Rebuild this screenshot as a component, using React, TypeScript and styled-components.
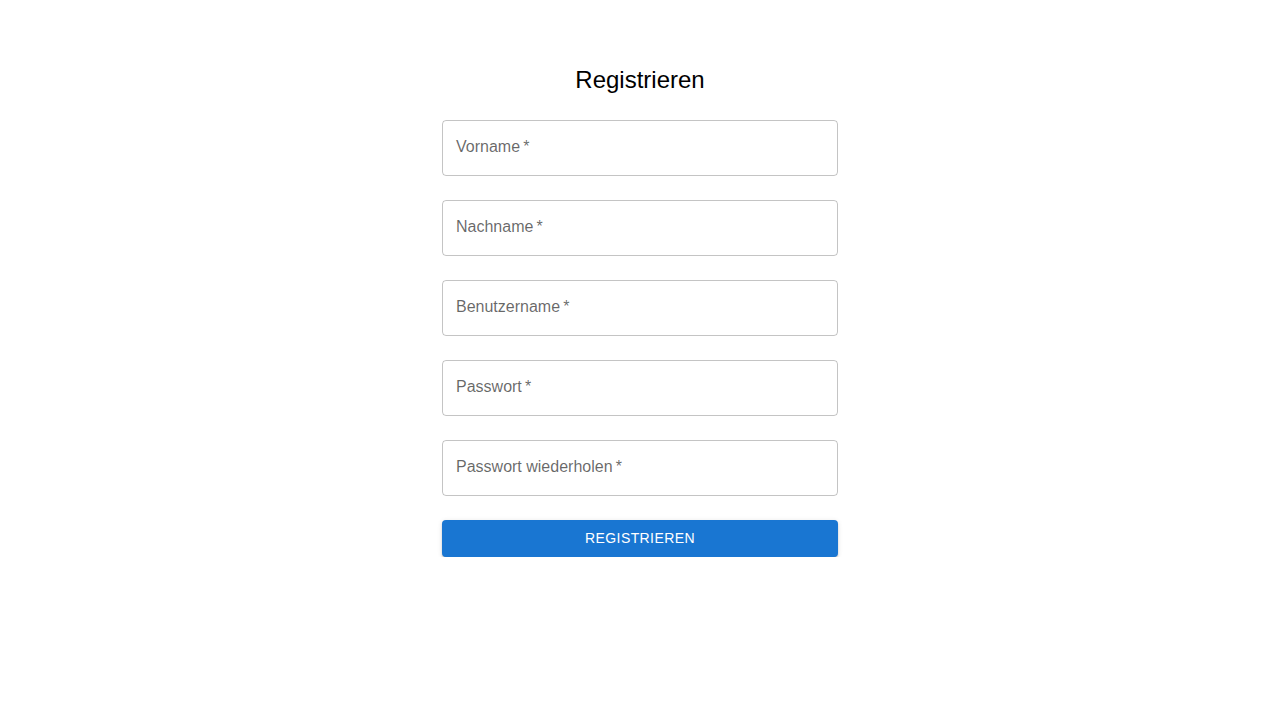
import React from "react";
import styled, { createGlobalStyle } from "styled-components";

const Global = createGlobalStyle`
  html, body { margin: 0; padding: 0; background: #fff; }
  body { font-family: "Liberation Sans", Arial, sans-serif; }
  * { box-sizing: border-box; }
`;

const Page = styled.main`
  display: flex;
  justify-content: center;
  padding-top: 64px;
`;

const Form = styled.form`
  width: 396px;
  display: flex;
  flex-direction: column;
  gap: 24px;
`;

const Title = styled.h1`
  margin: 0;
  font-size: 24px;
  font-weight: 400;
  line-height: 32px;
  text-align: center;
  color: #000;
`;

const Field = styled.label`
  position: relative;
  display: flex;
  align-items: center;
  height: 56px;
  padding: 0 13px 2px;
  border: 1px solid rgba(0, 0, 0, 0.23);
  border-radius: 4px;
  font-size: 16px;
  color: rgba(0, 0, 0, 0.6);
  cursor: text;
`;

const Input = styled.input`
  position: absolute;
  inset: 0;
  width: 100%;
  border: none;
  background: transparent;
  outline: none;
  opacity: 0;
`;

const Button = styled.button`
  height: 37px;
  padding: 0 0 2px;
  border: none;
  border-radius: 4px;
  background: #1976d2;
  color: #fff;
  font-family: "Liberation Sans", Arial, sans-serif;
  font-size: 14px;
  font-weight: 500;
  letter-spacing: 0.4px;
  text-transform: uppercase;
  box-shadow: 0 3px 1px -2px rgba(0,0,0,0.2), 0 2px 2px 0 rgba(0,0,0,0.14), 0 1px 5px 0 rgba(0,0,0,0.12);
  cursor: pointer;
`;

const fields = [
  { label: "Vorname", type: "text" },
  { label: "Nachname", type: "text" },
  { label: "Benutzername", type: "text" },
  { label: "Passwort", type: "password" },
  { label: "Passwort wiederholen", type: "password" },
];

export default function App() {
  return (
    <>
      <Global />
      <Page>
        <Form onSubmit={(e) => e.preventDefault()}>
          <Title>Registrieren</Title>
          {fields.map((f) => (
            <Field key={f.label}>
              {f.label}&thinsp;*
              <Input type={f.type} aria-label={f.label} />
            </Field>
          ))}
          <Button type="submit">Registrieren</Button>
        </Form>
      </Page>
    </>
  );
}
